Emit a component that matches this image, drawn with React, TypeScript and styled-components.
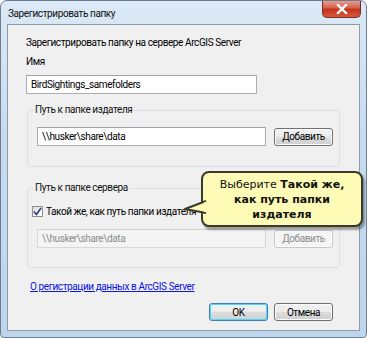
import * as React from "react";
import styled, { createGlobalStyle } from "styled-components";

const GlobalStyle = createGlobalStyle`
  html, body {
    margin: 0;
    padding: 0;
    background: #ffffff;
  }
  body {
    font-family: Roboto, "Liberation Sans", sans-serif;
    font-size: 10px;
    letter-spacing: -0.4px;
    color: #000;
  }
`;

const Window = styled.div`
  position: relative;
  width: 367px;
  height: 338px;
  box-sizing: border-box;
  border: 1px solid #6b7d90;
  border-radius: 7px 7px 4px 4px;
  background: linear-gradient(180deg, #dce9f6 0%, #c8dbef 40%, #bfd5ec 100%);
  display: flex;
  flex-direction: column;
  overflow: hidden;
`;

const TitleBar = styled.div`
  height: 23px;
  display: flex;
  align-items: center;
  justify-content: space-between;
  padding-left: 7px;
`;

const Title = styled.span`
  color: #111;
  margin-top: 2px;
`;

const CloseButton = styled.div`
  align-self: flex-start;
  width: 39px;
  height: 18px;
  margin-right: 5px;
  margin-top: -1px;
  box-sizing: border-box;
  border: 1px solid #7a2a20;
  border-top: none;
  border-radius: 0 0 5px 5px;
  background: linear-gradient(180deg, #e8a59a 0%, #d7634f 45%, #c2331b 55%, #d75a3c 100%);
  display: flex;
  align-items: center;
  justify-content: center;
`;

const Client = styled.div`
  flex: 1;
  margin: 0 6px 6px 6px;
  border: 1px solid #8b9cad;
  background: #f0f0f0;
  padding: 0 19px 0 18px;
  display: flex;
  flex-direction: column;
`;

const Heading = styled.div`
  margin-top: 10px;
  line-height: 16px;
`;

const Label = styled.div`
  margin-top: 3px;
  line-height: 16px;
`;

const TextBox = styled.div<{ $width: number; $disabled?: boolean }>`
  width: ${(p) => p.$width}px;
  height: 19px;
  box-sizing: border-box;
  border: 1px solid ${(p) => (p.$disabled ? "#d6d9dc" : "#abadb3")};
  border-top-color: ${(p) => (p.$disabled ? "#cfd2d5" : "#9ea3ab")};
  background: ${(p) => (p.$disabled ? "#f4f4f4" : "#ffffff")};
  color: ${(p) => (p.$disabled ? "#8b8b8b" : "#000")};
  padding: 0 4px;
  line-height: 17px;
  white-space: nowrap;
`;

const NameBox = styled(TextBox)`
  margin-top: 5px;
`;

const Group = styled.fieldset<{ $height: number; $top: number }>`
  margin: ${(p) => p.$top}px 0 0 1px;
  height: ${(p) => p.$height}px;
  box-sizing: border-box;
  border: 1px solid #d5dfe5;
  border-radius: 3px;
  padding: 10px 6px 0 9px;
`;

const Legend = styled.legend`
  padding: 0 2px;
  margin-left: -4px;
  line-height: 14px;
  color: #111;
`;

const PathRow = styled.div<{ $top?: number }>`
  display: flex;
  gap: 8px;
  align-items: center;
  margin-top: ${(p) => p.$top ?? 0}px;
`;

const Button = styled.div<{ $focused?: boolean; $disabled?: boolean }>`
  width: 59px;
  height: 18px;
  box-sizing: border-box;
  border: 1px solid ${(p) => (p.$focused ? "#3c7fb1" : p.$disabled ? "#c8c8c8" : "#707070")};
  border-radius: 3px;
  background: ${(p) =>
    p.$disabled
      ? "#f4f4f4"
      : "linear-gradient(180deg, #f2f2f2 0%, #ebebeb 50%, #dddddd 51%, #cfcfcf 100%)"};
  box-shadow: ${(p) => (p.$focused ? "inset 0 0 0 1px #48d9fd" : "inset 0 0 0 1px #fcfcfc")};
  color: ${(p) => (p.$disabled ? "#8d8d8d" : "#000")};
  display: flex;
  align-items: center;
  justify-content: center;
`;

const CheckRow = styled.div`
  display: flex;
  align-items: center;
  gap: 3px;
  margin-left: -5px;
  margin-top: -1px;
  height: 14px;
`;

const CheckBox = styled.div`
  width: 11px;
  height: 11px;
  box-sizing: border-box;
  border: 1px solid #8e8f8f;
  background: linear-gradient(135deg, #dcdcdc, #ffffff);
  display: flex;
  align-items: center;
  justify-content: center;
`;

const HelpLink = styled.a`
  color: #0a12e6;
  text-decoration: underline;
  margin-top: 11px;
  margin-left: 4px;
  line-height: 16px;
  align-self: flex-start;
`;

const Footer = styled.div`
  display: flex;
  justify-content: flex-end;
  gap: 6px;
  margin-top: 8px;
  margin-right: 7px;
`;

const Callout = styled.div`
  position: absolute;
  left: 200px;
  top: 170px;
  width: 162px;
  height: 56px;
  box-sizing: border-box;
  border: 2px solid #3a3a2a;
  border-radius: 8px;
  background: #fdfbb5;
  box-shadow: 2px 3px 2px rgba(0, 0, 0, 0.35);
  font-family: "DejaVu Sans", "Noto Sans", sans-serif;
  font-size: 11px;
  letter-spacing: 0;
  line-height: 15px;
  text-align: center;
  display: flex;
  align-items: center;
  justify-content: center;
  color: #111;
`;

const Pointer = styled.svg`
  position: absolute;
  left: -20px;
  top: 25px;
`;

export default function App() {
  return (
    <>
      <GlobalStyle />
      <Window>
        <TitleBar>
          <Title>Зарегистрировать папку</Title>
          <CloseButton>
            <svg width="12" height="10" viewBox="0 0 12 10">
              <path
                d="M2 1 L10 9 M10 1 L2 9"
                stroke="#ffffff"
                strokeWidth="2.4"
                strokeLinecap="square"
              />
            </svg>
          </CloseButton>
        </TitleBar>
        <Client>
          <Heading>Зарегистрировать папку на сервере ArcGIS Server</Heading>
          <Label>Имя</Label>
          <NameBox $width={231}>BirdSightings_samefolders</NameBox>
          <Group $height={64} $top={9}>
            <Legend>Путь к папке издателя</Legend>
            <PathRow>
              <TextBox $width={229}>\\husker\share\data</TextBox>
              <Button>Добавить</Button>
            </PathRow>
          </Group>
          <Group $height={87} $top={14}>
            <Legend>Путь к папке сервера</Legend>
            <CheckRow>
              <CheckBox>
                <svg width="9" height="9" viewBox="0 0 9 9">
                  <path d="M1 4.5 L3.5 7.5 L8 1" fill="none" stroke="#2a3f8a" strokeWidth="1.6" />
                </svg>
              </CheckBox>
              <span>Такой же, как путь папки издателя</span>
            </CheckRow>
            <PathRow $top={11}>
              <TextBox $width={229} $disabled>\\husker\share\data</TextBox>
              <Button $disabled>Добавить</Button>
            </PathRow>
          </Group>
          <HelpLink href="#">О регистрации данных в ArcGIS Server</HelpLink>
          <Footer>
            <Button $focused>OK</Button>
            <Button>Отмена</Button>
          </Footer>
        </Client>
        <Callout>
          <Pointer width="24" height="16" viewBox="0 0 24 16">
            <path d="M23 3 L2 11 L23 15" fill="#fdfbb5" stroke="#3a3a2a" strokeWidth="2" strokeLinejoin="round" />
            <rect x="21" y="4" width="3" height="10" fill="#fdfbb5" />
          </Pointer>
          <div>
            Выберите <b>Такой же,</b>
            <br />
            <b>как путь папки</b>
            <br />
            <b>издателя</b>
          </div>
        </Callout>
      </Window>
    </>
  );
}
